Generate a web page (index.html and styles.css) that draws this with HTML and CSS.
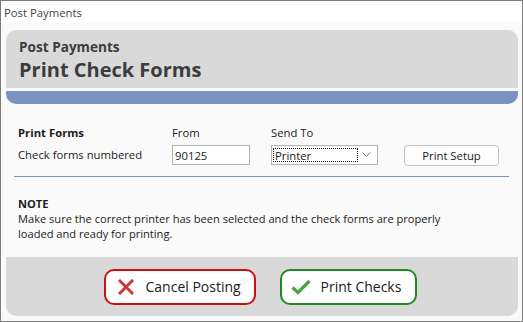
FILE: index.html
```html
<!DOCTYPE html>
<html lang="en">
<head>
    <meta charset="UTF-8">
    <title>Post Payments</title>
    <link rel="stylesheet" href="styles.css">
</head>
<body>
    <div class="window">
        <div class="titlebar">Post Payments</div>
        <div class="client">
            <!-- Header banner -->
            <div class="banner">
                <div class="banner-top">
                    <div class="banner-sub">Post Payments</div>
                    <h1>Print Check Forms</h1>
                </div>
                <div class="banner-band"></div>
            </div>

            <!-- Form section -->
            <div class="form-grid">
                <div class="lbl bold">Print Forms</div>
                <div class="lbl">From</div>
                <div class="lbl">Send To</div>
                <div></div>
                <div class="lbl">Check forms numbered</div>
                <div><input class="txt" type="text" value="90125"></div>
                <div class="select">
                    <span class="select-value">Printer</span>
                    <svg class="chev" width="9" height="6" viewBox="0 0 9 6"><path d="M0.5 0.5 L4.5 4.5 L8.5 0.5" fill="none" stroke="#7a7a7a" stroke-width="1"/></svg>
                </div>
                <div><button class="btn-setup">Print Setup</button></div>
            </div>

            <div class="sep"></div>

            <div class="note">
                <div class="bold">NOTE</div>
                <p>Make sure the correct printer has been selected and the check forms are properly loaded and ready for printing.</p>
            </div>

            <!-- Footer buttons -->
            <div class="footer">
                <button class="big-btn cancel">
                    <svg width="16" height="16" viewBox="0 0 16 16"><path d="M2 2 L14 14 M14 2 L2 14" stroke="#c83a3a" stroke-width="3" stroke-linecap="square"/></svg>
                    <span>Cancel Posting</span>
                </button>
                <button class="big-btn ok">
                    <svg width="20" height="16" viewBox="0 0 20 16"><path d="M1.5 8.5 L7 13.5 L18.5 2" fill="none" stroke="#46a83a" stroke-width="3.2"/></svg>
                    <span>Print Checks</span>
                </button>
            </div>
        </div>
    </div>
</body>
</html>
```

FILE: styles.css
```css
/* Basic page setup */
body {
    margin: 0;
    padding: 0;
    background-color: #ffffff;
    font-family: "Open Sans", "Noto Sans", sans-serif;
    color: #1a1a1a;
}

.window {
    width: 523px;
    height: 322px;
    box-sizing: border-box;
    border: 1px solid #7d7d7d;
    display: flex;
    flex-direction: column;
}

.titlebar {
    height: 22px;
    padding-left: 3px;
    font-size: 11.3px;
    line-height: 24px;
    color: #444;
    background-color: #ffffff;
}

.client {
    flex: 1;
    background-color: #fafafa;
    padding: 7px 4px 5px 5px;
    display: flex;
    flex-direction: column;
}

/* Banner */
.banner-top {
    height: 58px;
    background-color: #d9d9d9;
    border-radius: 10px 10px 0 0;
    padding: 8px 0 0 13px;
    box-sizing: border-box;
}

.banner-sub {
    font-size: 13.6px;
    font-weight: bold;
    color: #3c3c3c;
    line-height: 17px;
}

.banner-top h1 {
    margin: 2px 0 0 0;
    font-size: 20px;
    font-weight: bold;
    color: #3c3c3c;
    line-height: 25px;
}

.banner-band {
    margin-top: 3px;
    height: 13px;
    background-color: #7b93c1;
    border-radius: 0 0 10px 10px;
}

/* Form grid */
.form-grid {
    display: grid;
    grid-template-columns: 154px 99px 133px 100px;
    grid-template-rows: 18px 22px;
    row-gap: 2px;
    margin: 20px 0 0 12px;
    align-items: center;
    font-size: 11.3px;
}

.lbl {
    line-height: 16px;
}

.bold {
    font-weight: bold;
}

.txt {
    width: 78px;
    height: 20px;
    box-sizing: border-box;
    border: 1px solid #b4b4b4;
    padding: 1px 2px 0 2px;
    font-family: inherit;
    font-size: 11.3px;
    color: #1a1a1a;
    background: #fff;
    outline: none;
}

.select {
    width: 107px;
    height: 20px;
    box-sizing: border-box;
    border: 1px solid #b4b4b4;
    background-color: #fff;
    display: flex;
    align-items: center;
    padding: 0 6px 0 1px;
}

.select-value {
    width: 85px;
    height: 14px;
    line-height: 13px;
    border: 1px dotted #222;
    box-sizing: border-box;
    padding-left: 1px;
    font-size: 11.3px;
}

.chev {
    margin-left: auto;
}

.btn-setup {
    width: 95px;
    height: 21px;
    border: 1px solid #c3c3c3;
    border-radius: 4px;
    background-color: #fdfdfd;
    font-family: inherit;
    font-size: 11.3px;
    color: #1a1a1a;
    padding: 0;
}

.sep {
    height: 1px;
    background-color: #7b93c1;
    margin: 10px 9px 0 8px;
}

.note {
    margin: 19px 0 0 12px;
    font-size: 11.1px;
    line-height: 15px;
}

.note p {
    margin: 0;
    width: 440px;
}

/* Footer */
.footer {
    margin-top: auto;
    height: 59px;
    background-color: #d9d9d9;
    border-radius: 0 0 10px 10px;
    display: flex;
    justify-content: center;
    align-items: center;
    gap: 24px;
    padding-right: 4px;
}

.big-btn {
    height: 36px;
    box-sizing: border-box;
    border-radius: 10px;
    background-color: #fff;
    font-family: inherit;
    font-size: 14px;
    color: #1a1a1a;
    display: flex;
    align-items: center;
    gap: 12px;
    padding: 0 0 0 12px;
    white-space: nowrap;
}

.cancel {
    width: 152px;
    border: 2px solid #cc1010;
}

.ok {
    width: 137px;
    border: 2px solid #1f8a1f;
    padding-left: 9px;
    gap: 10px;
}
```
